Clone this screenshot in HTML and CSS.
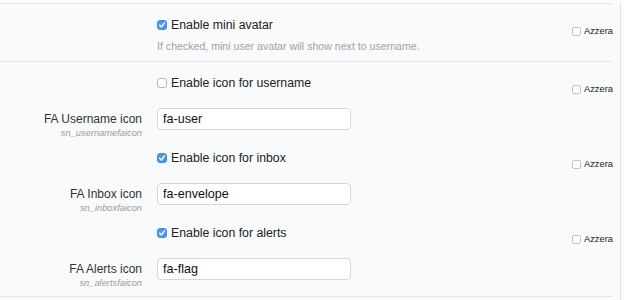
FILE: index.html
```html
<!DOCTYPE html>
<html lang="it">
<head>
    <meta charset="UTF-8">
    <title>Opzioni - Icone e avatar</title>
    <link rel="stylesheet" href="styles.css">
</head>
<body>
    <div class="page">
        <!-- Mini avatar -->
        <div class="block">
            <div class="row">
                <div class="lbl"></div>
                <div class="val">
                    <label class="check"><span class="box on"></span>Enable mini avatar</label>
                    <p class="hint">If checked, mini user avatar will show next to username.</p>
                </div>
                <div class="reset"><span class="box small"></span>Azzera</div>
            </div>
        </div>

        <!-- Icone -->
        <div class="block">
            <div class="row opt">
                <div class="lbl"></div>
                <div class="val">
                    <label class="check"><span class="box"></span>Enable icon for username</label>
                </div>
                <div class="reset"><span class="box small"></span>Azzera</div>
            </div>
            <div class="row field">
                <div class="lbl">
                    <span class="name">FA Username icon</span>
                    <span class="key">sn_usernamefaicon</span>
                </div>
                <div class="val"><input class="text" type="text" value="fa-user"></div>
                <div class="reset"></div>
            </div>

            <div class="row opt">
                <div class="lbl"></div>
                <div class="val">
                    <label class="check"><span class="box on"></span>Enable icon for inbox</label>
                </div>
                <div class="reset"><span class="box small"></span>Azzera</div>
            </div>
            <div class="row field">
                <div class="lbl">
                    <span class="name">FA Inbox icon</span>
                    <span class="key">sn_inboxfaicon</span>
                </div>
                <div class="val"><input class="text" type="text" value="fa-envelope"></div>
                <div class="reset"></div>
            </div>

            <div class="row opt">
                <div class="lbl"></div>
                <div class="val">
                    <label class="check"><span class="box on"></span>Enable icon for alerts</label>
                </div>
                <div class="reset"><span class="box small"></span>Azzera</div>
            </div>
            <div class="row field">
                <div class="lbl">
                    <span class="name">FA Alerts icon</span>
                    <span class="key">sn_alertsfaicon</span>
                </div>
                <div class="val"><input class="text" type="text" value="fa-flag"></div>
                <div class="reset"></div>
            </div>
        </div>
    </div>
</body>
</html>
```

FILE: styles.css
```css
* {
    margin: 0;
    padding: 0;
    box-sizing: border-box;
}

body {
    font-family: 'Liberation Sans', Arial, sans-serif;
    background: #fdfdfe;
    color: #222;
    padding-top: 3px;
}

.page {
    width: 621px;
    padding-right: 7px;
    border-right: 1px solid #dde2ea;
    background: #f9fafc;
    min-height: 297px;
}

.block {
    border-top: 1px solid #e2e8ef;
    padding: 13px 0 16px;
}

.block:first-child {
    padding-bottom: 8px;
}

.block:last-child {
    border-bottom: 1px solid #e2e8ef;
}

.row {
    display: flex;
    align-items: flex-start;
}

.opt {
    height: 16px;
}

.opt + .field {
    margin-top: 17px;
}

.field + .opt {
    margin-top: 20px;
}

.field {
    height: 22px;
}

.lbl {
    width: 142px;
    margin-right: 15px;
    text-align: right;
    padding-top: 3px;
}

.lbl .name {
    display: block;
    font-size: 12px;
    line-height: 16px;
    color: #333;
}

.lbl .key {
    display: block;
    font-size: 9.3px;
    font-style: italic;
    line-height: 12px;
    color: #9a9a9a;
}

.val {
    flex: 1;
}

.check {
    display: flex;
    align-items: center;
    font-size: 12.3px;
    line-height: 16px;
    color: #222;
}

.box {
    width: 10px;
    height: 10px;
    margin-right: 4px;
    border: 1px solid #b8b8b8;
    border-radius: 3px;
    background: #fff;
    flex-shrink: 0;
}

.box.on {
    border-color: #3c8de3;
    background: #4a97ea url("data:image/svg+xml,%3Csvg xmlns='http://www.w3.org/2000/svg' viewBox='0 0 10 10'%3E%3Cpath d='M2.6 5.2 4.3 7 7.5 2.8' fill='none' stroke='white' stroke-width='1.4' stroke-linecap='round' stroke-linejoin='round'/%3E%3C/svg%3E") center / 10px 10px no-repeat;
}

.box.small {
    width: 9px;
    height: 9px;
    margin-right: 3px;
    border-color: #c2c2c2;
    border-radius: 2px;
}

.hint {
    margin-top: 6px;
    font-size: 10.6px;
    line-height: 14px;
    color: #a2a2a2;
}

.reset {
    width: 41px;
    display: flex;
    align-items: center;
    padding-top: 8px;
    font-size: 9.3px;
    line-height: 12px;
    color: #222;
}

.field .reset {
    padding-top: 0;
}

.text {
    width: 194px;
    height: 22px;
    padding: 0 5px;
    border: 1px solid #d3d6db;
    border-radius: 4px;
    background: #fff;
    font-family: 'Liberation Sans', Arial, sans-serif;
    font-size: 12.6px;
    color: #111;
}
```
